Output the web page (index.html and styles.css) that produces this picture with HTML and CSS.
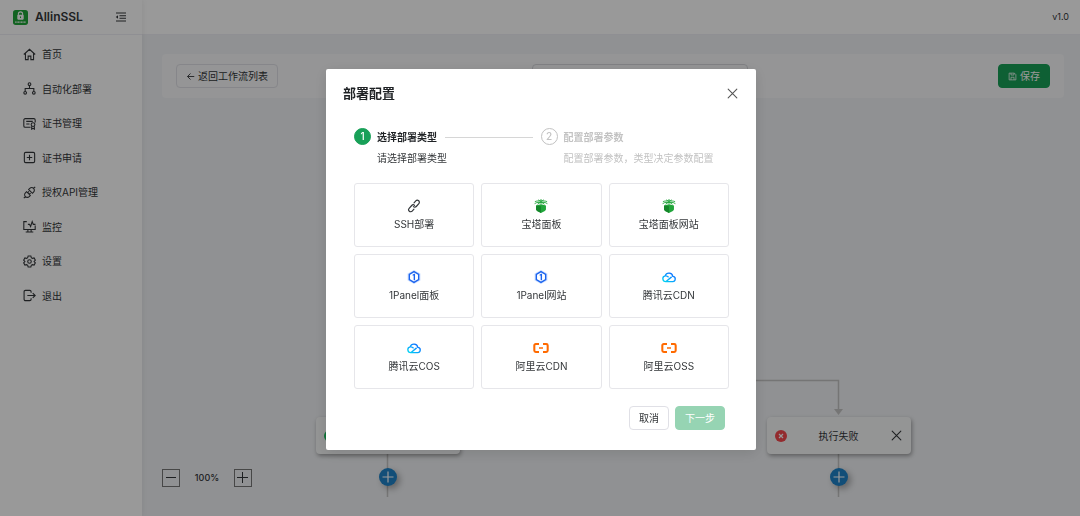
FILE: index.html
```html
<!DOCTYPE html>
<html lang="zh-CN">
<head>
<meta charset="utf-8">
<title>AllinSSL</title>
<link rel="stylesheet" href="styles.css">
</head>
<body>
<svg class="defs" width="0" height="0" aria-hidden="true">
  <defs>
    <linearGradient id="cloud-fill" x1="0" y1="1" x2="1" y2="0">
      <stop offset="0" stop-color="#00d8f0"/><stop offset=".5" stop-color="#0a9dff"/><stop offset="1" stop-color="#0a5cff"/>
    </linearGradient>
    <symbol id="i-link" viewBox="0 0 24 24"><g fill="none" stroke="#333639" stroke-width="2" stroke-linecap="round" transform="rotate(-48 12 12)"><path d="M8 15.500H3.500a3.500 3.500 0 0 1 0-7H10a3.500 3.500 0 0 1 3.500 3.500"/><path d="M16 8.500h4.500a3.500 3.500 0 0 1 0 7H14a3.500 3.500 0 0 1-3.500-3.500"/></g></symbol>
    <symbol id="i-bt" viewBox="0 0 24 24"><path fill="#20a53a" d="M3.500 11 12 9l8.500 2v7.200c0 1.800-4 3.800-8.500 5.800-4.500-2-8.500-4-8.500-5.800z"/><path fill="#14862a" d="M3.500 11 12 12.500V24c-4.500-2-8.500-4-8.500-5.800z"/><g fill="none" stroke="#20a53a" stroke-width="1.500"><path d="M12 0v9M1 8l4-2h14l4 2M1.500 4.500 5 3.500h14l3.500 1M7 1.500l5 2.500 5-2.500M6 9l6-4 6 4"/></g></symbol>
    <symbol id="i-panel" viewBox="0 0 24 24"><path fill="#cfe0ff" d="M12 0 23 6v12l-11 6L1 18V6z"/><path fill="#fff" stroke="#1a63ee" stroke-width="2.400" d="m12 2.800 8 4.600v9.200l-8 4.600-8-4.600V7.400z"/><path fill="#1a63ee" d="M9.500 8.200 12 6.500h1.800V17.500h-2.400V9.500H9.500z"/></symbol>
    <symbol id="i-tencent" viewBox="0 0 24 24"><path fill="none" stroke="url(#cloud-fill)" stroke-width="2.300" stroke-linejoin="round" d="M6.500 20h11.300a4.500 4.500 0 0 0 .7-9 6.700 6.700 0 0 0-13-.9A5 5 0 0 0 6.500 20L16.500 11.800M5.500 10.200c2.300-.4 4 .4 5.800 2.200"/></symbol>
    <symbol id="i-ali" viewBox="0 0 28 24"><path fill="none" stroke="#ff6a00" stroke-width="3.600" d="M10.500 5H4.800a2.500 2.500 0 0 0-2.500 2.500v9A2.500 2.500 0 0 0 4.800 19h5.700M17.500 5h5.700a2.500 2.500 0 0 1 2.500 2.500v9a2.500 2.500 0 0 1-2.500 2.500h-5.700"/><path fill="#ff6a00" d="M10.500 10.700h7v2.600h-7z"/></symbol>
    <symbol id="i-x" viewBox="0 0 12 12"><path d="m2 2 8 8M10 2l-8 8" fill="none" stroke="currentColor" stroke-width="1" stroke-linecap="round"/></symbol>
    <symbol id="i-plus" viewBox="0 0 18 18"><path d="M9 3.500v11M3.500 9h11" fill="none" stroke="currentColor" stroke-width="1.200"/></symbol>
  </defs>
</svg>

<div class="app">
  <aside class="sidebar">
    <div class="brand">
      <svg class="logo" viewBox="0 0 28 28"><rect width="28" height="28" rx="5" fill="#20a53a"/><path d="M10 10V7.500a4 4 0 0 1 8 0V10" fill="none" stroke="#fff" stroke-width="2"/><rect x="8" y="9" width="12" height="9" rx="1.500" fill="#fff"/><path d="M14 12v3" stroke="#20a53a" stroke-width="2"/><path d="M4 22.500h20" stroke="#fff" stroke-width="2.500" stroke-dasharray="2 .7"/></svg>
      <span class="brand-name">AllinSSL</span>
      <button class="icon-button" aria-label="收起菜单"><svg class="fold" viewBox="0 0 24 24"><path d="M2 4h20M9 9.500h13M9 14.500h13M2 20h20" fill="none" stroke="currentColor" stroke-width="2"/><path fill="currentColor" d="m6 8.500v7L1.500 12z"/></svg></button>
    </div>
    <nav class="menu">
      <a href="#"><svg viewBox="0 0 24 24"><path d="M1.500 12 12 2.500 22.500 12M4.500 10v11.500h5V15h5v6.500h5V10"/></svg>首页</a>
      <a href="#"><svg viewBox="0 0 24 24"><circle cx="12" cy="4" r="2.500"/><circle cx="4" cy="20" r="2.500"/><circle cx="20" cy="20" r="2.500"/><path d="M12 6.500V12M4 17.500V12h16v5.500"/></svg>自动化部署</a>
      <a href="#"><svg viewBox="0 0 24 24"><path d="M14 19H4a2.500 2.500 0 0 1-2.500-2.500v-11A2.500 2.500 0 0 1 4 3h16a2.500 2.500 0 0 1 2.500 2.500V10M6 8h12M6 13h6"/><circle cx="18.500" cy="14" r="3.500"/><path d="M16 17v5.500l2.500-1.500 2.500 1.500V17"/></svg>证书管理</a>
      <a href="#"><svg viewBox="0 0 24 24"><rect x="2.500" y="2.500" width="19" height="19" rx="2.500"/><path d="M12 7v10M7 12h10"/></svg>证书申请</a>
      <a href="#"><svg viewBox="0 0 24 24"><path d="m10.500 6.500 7 7 2-2a4.900 4.900 0 0 0-7-7zM6.500 10.500l7 7-2 2a4.900 4.900 0 0 1-7-7zM19.500 4.500l3-3M4.500 19.500l-3 3M8.500 12.500l2.500-2.500M11.500 15.500l2.500-2.500"/></svg>授权API管理</a>
      <a href="#"><svg viewBox="0 0 24 24"><path d="M7 3H1.500v14.500h21V10M9 17.500V22M15 17.500V22M5 22h14M9 8h3l2 4 3-9 2 5h4"/></svg>监控</a>
      <a href="#"><svg viewBox="0 0 24 24"><circle cx="12" cy="12" r="3.300"/><path d="M9.500 1.800h5l.8 3.200 2 1.200 3.200-.9 2.300 4.200-2.300 2.500 2.300 2.500-2.300 4.200-3.200-.9-2 1.200-.8 3.200h-5L8.700 19l-2-1.200-3.200.9-2.300-4.200L3.500 12 1.200 9.500l2.300-4.200 3.200.9 2-1.200z"/></svg>设置</a>
      <a href="#"><svg viewBox="0 0 24 24"><path d="M15 7V5a2.500 2.500 0 0 0-2.500-2.500H4.500A2.500 2.500 0 0 0 2 5v14a2.500 2.500 0 0 0 2.500 2.500h8A2.500 2.500 0 0 0 15 19v-2M8 12h14.500M18 7.500l4.500 4.500-4.500 4.500"/></svg>退出</a>
    </nav>
  </aside>

  <div class="page">
    <header class="topbar">v1.0</header>
    <main class="workspace">
      <div class="toolbar">
        <button class="button back"><svg viewBox="0 0 12 12"><path d="M11 6H2M6 2 2 6l4 4" fill="none" stroke="currentColor" stroke-width="1.200"/></svg>返回工作流列表</button>
        <input class="flow-name" type="text" aria-label="工作流名称">
        <button class="button primary"><svg viewBox="0 0 12 12"><path d="M1.500 1.500h7l2 2v7h-9zM4 1.500v2.500h4V1.500M4 10.500V7h4v3.500" fill="none" stroke="currentColor"/></svg>保存</button>
      </div>
    </main>
  </div>

  <svg class="edges" width="1080" height="516" aria-hidden="true"><path d="M387.500 417v-36.500h451V410M387.500 454v43M838.500 454v43" fill="none" stroke="#c4c4c4" stroke-width="1.500"/><path d="M834 409h9l-4.500 6z" fill="#c4c4c4"/></svg>
  <div class="node node-ok">
    <svg class="status" viewBox="0 0 12 12"><circle cx="6" cy="6" r="6" fill="#18c05c"/><path d="m3.500 6 2 2 3-4" fill="none" stroke="#fff"/></svg>
    <span>执行成功</span>
    <button class="icon-button" aria-label="删除成功分支"><svg class="remove"><use href="#i-x"/></svg></button>
  </div>
  <div class="node node-fail">
    <svg class="status" viewBox="0 0 12 12"><circle cx="6" cy="6" r="6" fill="#f5484e"/><path d="m4 4 4 4M8 4 4 8" stroke="#fff" stroke-width="1.200"/></svg>
    <span>执行失败</span>
    <button class="icon-button" aria-label="删除失败分支"><svg class="remove"><use href="#i-x"/></svg></button>
  </div>
  <button class="add add-ok" aria-label="添加成功节点"><svg><use href="#i-plus"/></svg></button>
  <button class="add add-fail" aria-label="添加失败节点"><svg><use href="#i-plus"/></svg></button>
  <div class="zoom">
    <button aria-label="缩小"><svg viewBox="0 0 16 16"><path d="M3 7.500h10" stroke="currentColor"/></svg></button>
    <span>100%</span>
    <button aria-label="放大"><svg viewBox="0 0 16 16"><path d="M2 7.500h11M7.500 2v11" stroke="currentColor"/></svg></button>
  </div>
</div>

<div class="overlay">
  <section class="modal" role="dialog" aria-labelledby="modal-title">
    <header class="modal-header">
      <h2 id="modal-title">部署配置</h2>
      <button class="icon-button" aria-label="关闭"><svg class="close"><use href="#i-x"/></svg></button>
    </header>
    <div class="modal-body">
      <ol class="steps">
        <li class="step active"><span class="badge">1</span><div class="step-text"><div class="step-title">选择部署类型</div><p>请选择部署类型</p></div></li>
        <li class="step"><span class="badge">2</span><div class="step-text"><div class="step-title">配置部署参数</div><p>配置部署参数，类型决定参数配置</p></div></li>
      </ol>
      <div class="cards">
        <button class="card"><svg><use href="#i-link"/></svg>SSH部署</button>
        <button class="card"><svg><use href="#i-bt"/></svg>宝塔面板</button>
        <button class="card"><svg><use href="#i-bt"/></svg>宝塔面板网站</button>
        <button class="card"><svg><use href="#i-panel"/></svg>1Panel面板</button>
        <button class="card"><svg><use href="#i-panel"/></svg>1Panel网站</button>
        <button class="card"><svg><use href="#i-tencent"/></svg>腾讯云CDN</button>
        <button class="card"><svg><use href="#i-tencent"/></svg>腾讯云COS</button>
        <button class="card"><svg class="wide"><use href="#i-ali"/></svg>阿里云CDN</button>
        <button class="card"><svg class="wide"><use href="#i-ali"/></svg>阿里云OSS</button>
      </div>
      <footer class="actions">
        <button class="button">取消</button>
        <button class="button primary" disabled>下一步</button>
      </footer>
    </div>
  </section>
</div>
</body>
</html>
```

FILE: styles.css
```css
* { box-sizing: border-box; }
body {
  margin: 0;
  color: #333639;
  font: 10px/16px Inter, "Noto Sans CJK SC", sans-serif;
}
button, input { font: inherit; color: inherit; }
button { cursor: pointer; }
svg { display: block; flex: none; }
.defs { position: absolute; }

.app { position: relative; display: flex; min-height: 100vh; overflow: hidden; }

.sidebar { width: 142px; flex: none; background: #fff; box-shadow: 0 0 6px rgba(0, 0, 0, .08); z-index: 1; }
.brand { display: flex; align-items: center; height: 35px; padding: 0 15px 0 13px; border-bottom: 1px solid #efeff5; }
.logo { width: 15px; height: 15px; }
.brand-name { flex: 1; margin-left: 7px; font-size: 12px; font-weight: 600; }
.icon-button { padding: 0; border: 0; background: none; }
.fold { width: 12px; height: 12px; }
.menu { display: grid; grid-auto-rows: 1fr; height: 276px; margin-top: 2px; }
.menu a { display: flex; align-items: center; gap: 6px; padding-left: 23px; color: inherit; text-decoration: none; }
.menu svg { width: 13px; height: 13px; fill: none; stroke: currentColor; stroke-width: 2; }

.page { flex: 1; display: flex; flex-direction: column; }
.topbar { height: 35px; padding: 9px 11px; background: #fff; border-bottom: 1px solid #efeff5; font-size: 9px; text-align: right; }
.workspace { flex: 1; padding: 19px 16px 0 20px; background: #f0f2f5; }
.toolbar { display: flex; align-items: center; justify-content: space-between; height: 44px; padding: 0 14px; border-radius: 4px; background: #f8f9fa; }

.button { display: flex; align-items: center; justify-content: center; gap: 3px; height: 24px; padding: 0 9px; border: 1px solid #e0e0e6; border-radius: 4px; background: transparent; }
.button svg { width: 9px; height: 9px; }
.primary { border-color: #18a058; background: #18a058; color: #fff; }
.primary:disabled { opacity: .45; cursor: default; }
.flow-name { width: 216px; height: 24px; margin-left: 3px; border: 1px solid #d6d6dc; border-radius: 4px; background: transparent; }

.edges { position: absolute; top: 0; left: 0; }
.node { position: absolute; top: 417px; display: flex; align-items: center; justify-content: space-between; width: 144px; height: 37px; padding: 0 8px; border-radius: 4px; background: #f7f8f9; box-shadow: 1px 2px 4px rgba(0, 0, 0, .35); }
.node-ok { left: 316px; }
.node-fail { left: 767px; }
.status { width: 12px; height: 12px; }
.remove { width: 13px; height: 13px; }
.add { position: absolute; top: 468px; width: 18px; height: 18px; padding: 0; border: 0; border-radius: 50%; background: #1e83c9; color: #fff; box-shadow: 3px 3px 6px rgba(0, 0, 0, .3); }
.add svg { width: 18px; height: 18px; }
.add-ok { left: 379px; }
.add-fail { left: 830px; }
.zoom { position: absolute; top: 469px; left: 162px; display: flex; align-items: center; justify-content: space-between; width: 90px; font-size: 9px; font-weight: 500; }
.zoom button { width: 18px; height: 18px; padding: 0; border: 1px solid #777; background: none; }
.zoom svg { width: 16px; height: 16px; }

.overlay { position: fixed; inset: 0; z-index: 2; display: flex; align-items: flex-start; justify-content: center; padding: 69px 0 0 2px; background: rgba(0, 0, 0, .4); }
.modal { width: 430px; max-width: 100%; border-radius: 2px; background: #fff; box-shadow: 0 3px 14px rgba(0, 0, 0, .12); }
.modal-header { display: flex; align-items: center; justify-content: space-between; padding: 15px 17px 0; }
.modal-header h2 { margin: 0; font-size: 13px; line-height: 18px; font-weight: 600; color: #1f2225; }
.close { width: 13px; height: 13px; color: #555; }
.modal-body { padding: 26px 27px 20px 28px; }
.steps { display: grid; grid-template-columns: 1fr 1fr; margin: 0 0 17px; padding: 0; list-style: none; }
.step { display: flex; gap: 6px; color: #c2c2c2; }
.step:last-child { margin: 0 -8px 0 -1px; }
.badge { flex: none; width: 17px; height: 17px; border: 1px solid #c2c2c2; border-radius: 50%; line-height: 15px; text-align: center; font-weight: 500; }
.step-text { flex: 1; }
.step-title { display: flex; align-items: center; gap: 8px; height: 18px; font-weight: 600; }
.step p { margin: 4px 0 0; white-space: nowrap; }
.active { color: #333639; }
.active .badge { border-color: #18a058; background: #18a058; color: #fff; }
.active .step-title { color: #1f2225; margin-right: 9px; }
.active .step-title::after { flex: 1; height: 1px; background: #d6d6d6; content: ""; }
.cards { display: grid; grid-template-columns: repeat(3, 1fr); grid-auto-rows: 64px; gap: 7px; }
.card { display: flex; flex-direction: column; align-items: center; justify-content: center; gap: 3px; padding: 0; border: 1px solid #e6e6ea; border-radius: 3px; background: #fff; }
.card svg { width: 14px; height: 14px; }
.card .wide { width: 16px; }
.actions { display: flex; justify-content: flex-end; gap: 6px; margin: 17px 4px 0 0; }
```
